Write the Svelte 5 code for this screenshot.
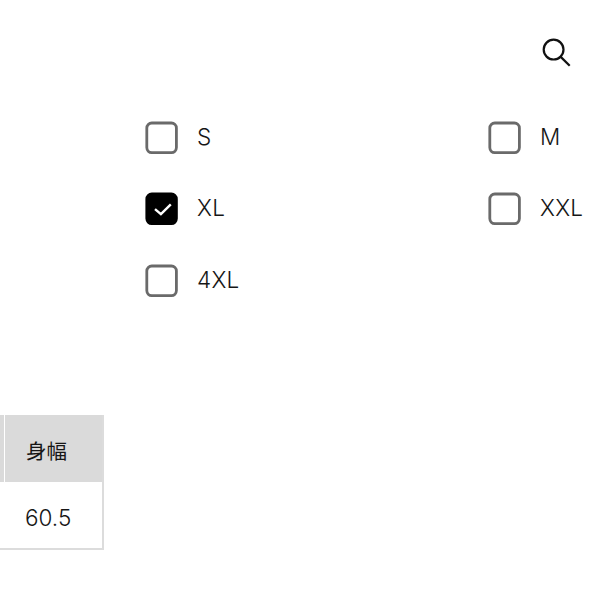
<script>
  const rows = [
    [{ label: 'S' }, { label: 'M' }],
    [{ label: 'XL', checked: true }, { label: 'XXL' }],
    [{ label: '4XL' }]
  ];
</script>

<div class="page">
  <header>
    <button class="search" aria-label="検索">
      <svg width="32" height="32" viewBox="0 0 32 32" fill="none" stroke="#111" stroke-width="2.2">
        <circle cx="13.6" cy="13.6" r="9.9" />
        <path d="M20.5 20.6 29.7 29.8" />
      </svg>
    </button>
  </header>

  <main class="sizes">
    {#each rows as row}
      <div class="row">
        {#each row as item}
          <div class="option">
            <svg class="box" class:checked={item.checked} width="34" height="34" viewBox="0 0 34 34">
              <rect x="1.8" y="2" width="29.6" height="29.6" rx="5" />
              {#if item.checked}
                <path d="M10 17.1 15.9 22.2 25.8 12.4" />
              {/if}
            </svg>
            <span class="label">{item.label}</span>
          </div>
        {/each}
      </div>
    {/each}
  </main>

  <div class="chart">
    <div class="col previous">
      <div class="head"></div>
      <div class="cell"></div>
    </div>
    <div class="col">
      <div class="head">身幅</div>
      <div class="cell">60.5</div>
    </div>
  </div>
</div>

<style>
  :global(body) {
    background: #fff;
  }
  .page {
    width: 608px;
    height: 608px;
    overflow: hidden;
    background: #fff;
    color: #161616;
    font-family: Inter, "Noto Sans CJK JP", sans-serif;
    font-size: 22.5px;
  }
  header {
    display: flex;
    justify-content: flex-end;
    box-sizing: border-box;
    height: 121px;
    padding: 36px 36px 0 0;
  }
  .search {
    width: 32px;
    height: 32px;
    padding: 0;
    border: 0;
    background: none;
  }
  .search svg {
    display: block;
  }
  .sizes {
    display: flex;
    flex-direction: column;
    gap: 37.4px;
    height: 294px;
    padding-left: 145px;
  }
  .row {
    display: grid;
    grid-template-columns: 343px 120px;
    height: 34px;
  }
  .option {
    display: flex;
    align-items: flex-start;
    gap: 18px;
  }
  .box {
    flex: none;
    display: block;
    fill: none;
    stroke: #6a6a6a;
    stroke-width: 2.8;
  }
  .checked rect {
    fill: #000;
    stroke: #000;
  }
  .checked path {
    stroke: #fff;
    stroke-width: 2.4;
  }
  .label {
    line-height: 32px;
    font-weight: 300;
    letter-spacing: 0.25px;
  }
  .chart {
    display: flex;
    gap: 1px;
    box-sizing: border-box;
    width: 104px;
    height: 135px;
    border-right: 2px solid #dcdcdc;
    border-bottom: 2px solid #dcdcdc;
  }
  .col {
    flex: 1;
  }
  .col.previous {
    flex: 0 0 4px;
  }
  .head {
    height: 67px;
    padding-left: 21px;
    background: #dadada;
    font-size: 20.5px;
    line-height: 74px;
  }
  .cell {
    height: 66px;
    padding-left: 20px;
    font-weight: 300;
    line-height: 71px;
  }
  .previous .head,
  .previous .cell {
    padding: 0;
  }
</style>
